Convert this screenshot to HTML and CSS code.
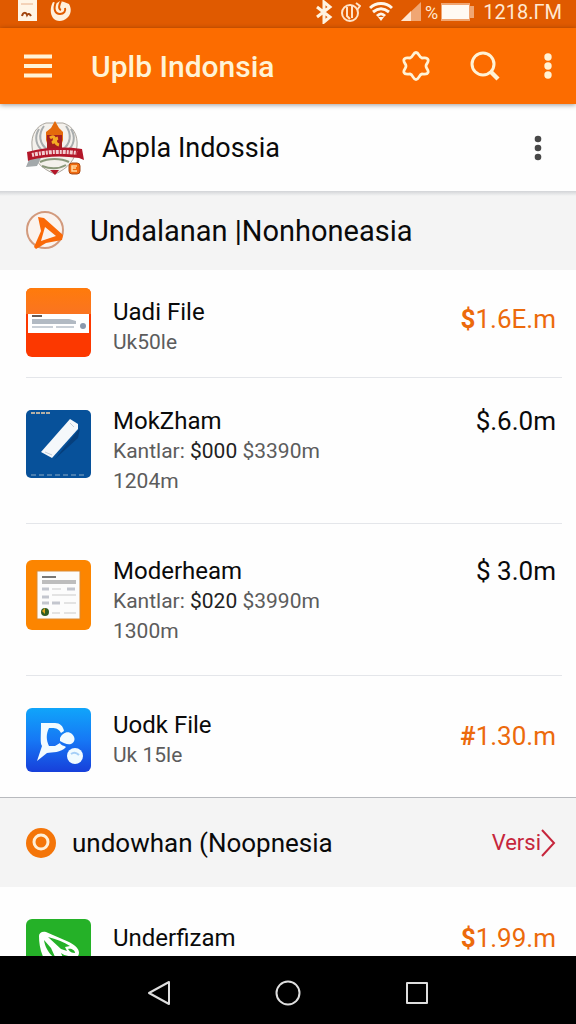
FILE: index.html
```html
<!DOCTYPE html>
<html lang="id">
<head>
    <meta charset="UTF-8">
    <meta name="viewport" content="width=device-width, initial-scale=1.0">
    <title>Uplb Indonsia</title>
    <link rel="stylesheet" href="styles.css">
</head>
<body>
    <!-- Status bar -->
    <div class="status-bar">
        <svg width="20" height="22" viewBox="0 0 20 22"><path fill="#fff5e6" d="M0 0h19v21H0z"/><path d="M3 4h12" stroke="#e8b08a" stroke-width="1"/><path d="M4 16c1-4 4-4 5-1 1-2 3-1 4 1" fill="none" stroke="#a04510" stroke-width="2"/></svg>
        <svg class="status-swirl" width="22" height="22" viewBox="0 0 22 22"><path fill="#fff0dc" d="M3 2l4 1 3-2 4 1 5 2c3 5 2 11-2 14-4 4-11 4-14 0C0 14 0 7 3 2z"/><path d="M6 2c-3 7-1 12 4 12 4 0 6-3 5-6M11 1c-2 4-3 8 0 9" fill="none" stroke="#e05a00" stroke-width="2"/></svg>
        <div class="status-right">
            <svg width="18" height="24" viewBox="0 0 18 24"><path d="M2 7l13 10-6 5V2l6 5L2 17" fill="none" stroke="#fff3e0" stroke-width="3"/></svg>
            <svg width="20" height="22" viewBox="0 0 20 22"><circle cx="9" cy="12" r="8" fill="none" stroke="#ffe3c8" stroke-width="2"/><path d="M6 6v9l3 3M11 5v12M15 2l4 3-3 4" fill="none" stroke="#ffe3c8" stroke-width="2"/></svg>
            <svg width="24" height="20" viewBox="0 0 24 20"><path d="M1 6c6-6 16-6 22 0M4 10c5-4 11-4 16 0M8 14c3-3 5-3 8 0" fill="none" stroke="#fff6ea" stroke-width="3"/><path fill="#fff6ea" d="M9 15h6l-3 4z"/></svg>
            <svg width="21" height="20" viewBox="0 0 21 20"><path fill="#f0a673" d="M20 0v19H0z"/><path fill="#ffe5cf" d="M10 9v10H0z"/></svg>
            <span class="percent">%</span>
            <svg width="34" height="18" viewBox="0 0 34 18"><path fill="#f0a673" d="M0 0h29v3h4v12h-4v3H0z"/><path fill="#fffaf3" d="M1 2h27v14H1z"/></svg>
            <span class="clock">1218.ΓM</span>
        </div>
    </div>

    <!-- App bar -->
    <header class="app-bar">
        <button class="icon-button" aria-label="Menu">
            <svg width="28" height="24" viewBox="0 0 28 24"><path d="M0 2.500h28M0 12h28M0 21.500h28" stroke="#fff3d6" stroke-width="4"/></svg>
        </button>
        <h1 class="app-title">Uplb Indonsia</h1>
        <button class="icon-button" aria-label="Settings">
            <svg width="28" height="30" viewBox="0 0 28 30"><path d="M14 1.500c3 0 3 5 6 5.500 3 0 5-1 6 1.500 1 3-2 4-2 6.500s3 4 2 6.500c-1 2.500-4 1.500-6 1.500-3 .500-3 5.500-6 5.500s-3-5-6-5.500c-2 0-5 1-6-1.500-1-2.500 2-4 2-6.500s-3-3.500-2-6.500c1-2.500 3-1.500 6-1.500 3-.500 3-5.500 6-5.500z" fill="none" stroke="#fff3d6" stroke-width="2.800"/></svg>
        </button>
        <button class="icon-button search-button" aria-label="Search">
            <svg width="30" height="30" viewBox="0 0 30 30"><circle cx="13" cy="13" r="11" fill="none" stroke="#fff3d6" stroke-width="3"/><path d="M20 20l8 8" stroke="#fff3d6" stroke-width="4.500"/></svg>
        </button>
        <button class="icon-button" aria-label="More">
            <svg width="8" height="28" viewBox="0 0 8 28" fill="#fff3d6"><circle cx="4" cy="5" r="3.700"/><circle cx="4" cy="14" r="3.700"/><circle cx="4" cy="23" r="3.700"/></svg>
        </button>
    </header>

    <main class="content">
        <div class="account">
            <svg width="58" height="54" viewBox="0 0 58 54">
                <path fill="#f4f1ec" stroke="#aaa59d" stroke-width="1" d="M20 2C10 5 5 14 6 25c0 14 10 23 23 28 12-5 21-14 22-28 1-11-4-20-14-23z"/>
                <path d="M18 5c-6 8-5 18 4 24M13 8c-5 8-3 17 4 22M40 5c6 8 5 18-4 24M45 8c5 8 3 17-4 22" fill="none" stroke="#a9adae" stroke-width="2"/>
                <path fill="#e46a0c" d="M29 0l4 7 4 4v8l-3 9H23l-3-9v-8l5-4z"/>
                <path fill="#a51e20" d="M21 14h15v16H21z"/>
                <path d="M24 17c5-4 6 3 2 5M32 17c-4 1-3 6 1 7" fill="none" stroke="#f4ac24" stroke-width="3"/>
                <path fill="#a3a9ab" d="M4 36L0 46l11-1 4-8z"/>
                <path d="M14 41c8-4 21-4 29 0M16 45c8 3 17 3 24-1" fill="none" stroke="#89977a" stroke-width="2"/>
                <path fill="#b31629" d="M1 31q27-7 55-3l2 11-5-2q-25-4-49 2l-2 1z"/>
                <path d="M6 34q22-5 45-2" fill="none" stroke="#f3cdd0" stroke-width="4" stroke-dasharray="2 1 3 1"/>
                <path fill="#b31629" d="M24 49h9l-4 5z"/>
                <rect x="43" y="42" width="11" height="11" rx="3" fill="#f06b10" stroke="#a84a16"/>
                <path d="M51 45h-5v5h5M46 47h4" fill="none" stroke="#ffd9a0" stroke-width="1.500"/>
            </svg>
            <h2 class="account-name">Appla Indossia</h2>
            <button class="icon-button" aria-label="Account options">
                <svg width="8" height="26" viewBox="0 0 8 26" fill="#484848"><circle cx="4" cy="4" r="3.300"/><circle cx="4" cy="13" r="3.300"/><circle cx="4" cy="22" r="3.300"/></svg>
            </button>
        </div>

        <div class="section-bar">
            <svg width="40" height="40" viewBox="0 0 40 40"><circle cx="19" cy="19" r="18" fill="#fbf3ee" stroke="#d29a7d" stroke-width="2"/><path fill="#fa6908" fill-rule="evenodd" d="M12 6l6 1 19 17-1 5-16 3-10 6-2-2 7-16zm7 10l-4 14 15-5z"/></svg>
            <h2 class="section-title">Undalanan |Nonhoneasia</h2>
        </div>

        <ul class="file-list">
            <li class="item item-first">
                <svg width="65" height="69" viewBox="0 0 65 69">
                    <defs>
                        <linearGradient id="orange" x1="0" y1="0" x2="0" y2="1"><stop offset="0" stop-color="#ff7b0b"/><stop offset="1" stop-color="#fa7421"/></linearGradient>
                    </defs>
                    <rect width="65" height="69" rx="6" fill="#fc3800"/>
                    <path fill="url(#orange)" d="M0 26V6q0-6 6-6h53q6 0 6 6v20z"/>
                    <path fill="#fff" d="M2 26h61v19H2z"/>
                    <path d="M6 28h10" stroke="#665b55" stroke-width="2"/>
                    <path fill="#b2bac3" d="M6 31h37l7 2v3H6z"/>
                    <path d="M6 39h21M30 39h18" stroke="#c9cfd6" stroke-width="2"/>
                    <circle cx="57" cy="38" r="3" fill="#8a98ad"/>
                </svg>
                <div class="item-text">
                    <h3 class="item-name">Uadi File</h3>
                    <p class="item-info">Uk50le</p>
                </div>
                <span class="price price-hot"><b>$</b>1.6E.m</span>
            </li>
            <li class="item item-tall">
                <svg width="65" height="68" viewBox="0 0 65 68">
                    <rect width="65" height="68" rx="5" fill="#07519a"/>
                    <path d="M5 3h20" stroke="#b5b0a5" stroke-width="2" stroke-dasharray="4 1"/>
                    <path fill="#063f7c" d="M28 50l26-32-2 10-23 21z"/>
                    <path fill="#f5f8fb" d="M44 9l8 5v5L26 48l-11-6z"/>
                    <path d="M44 13l4 4M19 42l7 3" stroke="#c4ced8" stroke-width="1"/>
                    <path d="M5 65h55" stroke="#487daf" stroke-width="2" stroke-dasharray="5 3"/>
                </svg>
                <div class="item-text">
                    <h3 class="item-name">MokZham</h3>
                    <p class="item-info">Kantlar: <span class="amount">$000</span> $3390m</p>
                    <p class="item-info">1204m</p>
                </div>
                <span class="price">$.6.0m</span>
            </li>
            <li class="item item-tall item-spaced">
                <svg width="65" height="70" viewBox="0 0 65 70">
                    <rect width="65" height="70" rx="6" fill="#fc8500"/>
                    <path fill="#fcfcfc" stroke="#d98a35" stroke-width="1" d="M11 11h43v48H11z"/>
                    <path d="M16 17h14" stroke="#777" stroke-width="2"/>
                    <path d="M16 22h34" stroke="#bdbdbd" stroke-width="4"/>
                    <path d="M16 29h7M41 29h8M16 37h7M16 43h7M26 43h8" stroke="#c3c6ce" stroke-width="3"/>
                    <path d="M26 29h9M26 35h24M26 53h8M38 43h12M38 53h12" stroke="#e3e3e3" stroke-width="2"/>
                    <circle cx="19" cy="52" r="4" fill="#315d22"/><path fill="#e1a51c" d="M16 51l3-3v6z"/>
                </svg>
                <div class="item-text">
                    <h3 class="item-name">Moderheam</h3>
                    <p class="item-info">Kantlar: <span class="amount">$020</span> $3990m</p>
                    <p class="item-info">1300m</p>
                </div>
                <span class="price">$ 3.0m</span>
            </li>
            <li class="item item-last">
                <svg width="65" height="64" viewBox="0 0 65 64">
                    <defs>
                        <linearGradient id="blue" x1="0" y1="0" x2="0" y2="1"><stop offset="0" stop-color="#10a5fa"/><stop offset="0.500" stop-color="#1678f5"/><stop offset="1" stop-color="#173fda"/></linearGradient>
                    </defs>
                    <rect width="65" height="64" rx="6" fill="url(#blue)"/>
                    <path fill="#f1fbff" fill-rule="evenodd" d="M15 15h14c5 0 8 3 9 8l-3 2c-2-4-5-5-9-5h-3c-3 6-3 12 0 18h6l5-3c1 3 4 2 6 4-5 6-14 5-19 6l-10 8 5-15c-2-3-1-8-1-23z"/>
                    <path fill="#f1fbff" d="M34 30c2-5 8-8 12-4 4 4 3 8-1 10-4 1-7-1-11-3z"/>
                    <circle cx="49" cy="48" r="8" fill="#f1fbff"/><path d="M45 46q4-3 8 1" fill="none" stroke="#a5cff7" stroke-width="2"/>
                </svg>
                <div class="item-text">
                    <h3 class="item-name">Uodk File</h3>
                    <p class="item-info">Uk 15le</p>
                </div>
                <span class="price price-hot"><b>#</b>1.30.m</span>
            </li>
        </ul>

        <div class="section-bar section-bar-more">
            <svg width="31" height="32" viewBox="0 0 31 32"><circle cx="15" cy="16" r="15" fill="#f47509"/><circle cx="15" cy="15" r="7" fill="none" stroke="#fff0d9" stroke-width="3"/></svg>
            <h2 class="section-title">undowhan (Noopnesia</h2>
            <a class="more-link" href="#">Versi<svg width="15" height="28" viewBox="0 0 15 28"><path d="M1 1l12 13L1 27" fill="none" stroke="#c6263c" stroke-width="2"/></svg></a>
        </div>

        <ul class="file-list">
            <li class="item item-last item-top">
                <svg width="65" height="64" viewBox="0 0 65 64">
                    <rect width="65" height="64" rx="6" fill="#25b128"/>
                    <path fill="#fff" fill-rule="evenodd" d="M13 17c0-3 3-5 7-4l23 10c8 4 12 9 9 14-7 1-13 0-17-3l5 12H22c-7-9-9-20-9-29zm5 4c1 8 6 15 12 19l-5-11zm4-3l13 12 6 2-2-4 5-1c-6-4-14-7-22-9zm20 12c2 3 4 4 7 4 0-3-4-5-7-4z"/>
                </svg>
                <div class="item-text">
                    <h3 class="item-name">Underfizam</h3>
                </div>
                <span class="price price-hot"><b>$</b>1.99.m</span>
            </li>
        </ul>
    </main>

    <!-- System navigation -->
    <nav class="nav-bar">
        <button class="icon-button" aria-label="Back">
            <svg width="24" height="28" viewBox="0 0 24 28"><path d="M22 3v22L2 14z" fill="none" stroke="#dedede" stroke-width="2" stroke-linejoin="round"/></svg>
        </button>
        <button class="icon-button" aria-label="Home">
            <svg width="26" height="26" viewBox="0 0 26 26"><circle cx="13" cy="13" r="11.500" fill="none" stroke="#dedede" stroke-width="2"/></svg>
        </button>
        <button class="icon-button" aria-label="Recent apps">
            <svg width="24" height="24" viewBox="0 0 24 24"><path d="M2 2h20v20H2z" fill="none" stroke="#dedede" stroke-width="2" stroke-linejoin="round"/></svg>
        </button>
    </nav>
</body>
</html>
```

FILE: styles.css
```css
/* General Page Styling */
* {
    box-sizing: border-box;
}
body {
    display: flex;
    flex-direction: column;
    height: 100vh;
    margin: 0;
    background-color: #fefefe;
    color: #0a0a0a;
    font-family: Roboto, "Liberation Sans", sans-serif;
}
h1, h2, h3, p, ul {
    margin: 0;
    padding: 0;
    font-weight: normal;
}
svg {
    display: block;
    flex: none;
}
.icon-button {
    padding: 0;
    border: none;
    background: none;
    cursor: pointer;
}

/* Status Bar */
.status-bar {
    display: flex;
    flex: none;
    height: 28px;
    padding: 0 14px 0 18px;
    background-color: #e05a00;
    color: #ffe9d2;
}
.status-swirl {
    margin-left: 12px;
}
.status-right {
    display: flex;
    align-items: center;
    gap: 8px;
    height: 24px;
    margin-left: auto;
}
.percent {
    margin: 0 -5px;
    font-size: 18px;
}
.clock {
    font-size: 20px;
}

/* App Bar */
.app-bar {
    display: flex;
    flex: none;
    align-items: center;
    height: 76px;
    padding: 0 24px;
    background-color: #fc6c00;
    box-shadow: 0 1px 5px rgba(0, 0, 0, 0.4);
    z-index: 1;
}
.app-title {
    flex: 1;
    margin-left: 39px;
    color: #fff3d6;
    font-size: 30px;
    font-weight: 500;
}
.search-button {
    margin: 0 44px 0 40px;
}

/* Content */
.content {
    flex: 1;
    min-height: 0;
    overflow: hidden;
}
.account {
    display: flex;
    align-items: center;
    height: 87px;
    padding: 0 34px 0 26px;
}
.account-name {
    flex: 1;
    margin-left: 18px;
    font-size: 27px;
}
.section-bar {
    display: flex;
    align-items: center;
    height: 79px;
    padding: 0 20px 0 26px;
    background: linear-gradient(#d2d4d7, #f4f4f4 5px);
}
.section-title {
    margin-left: 24px;
    font-size: 29px;
}
.section-bar-more {
    height: 90px;
    border-top: 1px solid #b8babe;
    background: #f4f4f4;
}
.section-bar-more .section-title {
    flex: 1;
    margin-left: 15px;
    font-size: 26px;
}
.more-link {
    display: flex;
    align-items: center;
    color: #c6263c;
    font-size: 22px;
    text-decoration: none;
}

/* File List */
.file-list {
    list-style-type: none;
}
.item {
    display: flex;
    margin: 0 14px 0 26px;
    padding-right: 6px;
    border-bottom: 1px solid #e4e6ea;
}
.item-text {
    flex: 1;
    margin-left: 22px;
}
.item-name {
    font-size: 24px;
    line-height: 30px;
}
.item-info {
    color: #5c5c5c;
    font-size: 21px;
    line-height: 30px;
}
.amount {
    color: #222;
}
.price {
    font-size: 26px;
    line-height: 30px;
}
.price-hot {
    align-self: center;
    padding-bottom: 8px;
    color: #ec6a0c;
}
.item-first {
    align-items: flex-end;
    padding-top: 18px;
    padding-bottom: 20px;
}
.item-tall {
    padding-top: 28px;
    padding-bottom: 27px;
}
.item-tall svg {
    margin-top: 4px;
}
.item-spaced {
    padding-top: 32px;
    padding-bottom: 29px;
}
.item-last {
    align-items: center;
    padding-top: 32px;
    padding-bottom: 25px;
    border-bottom: none;
}
.item-top {
    align-items: flex-start;
}
.item-top .price {
    align-self: flex-start;
}
.item-top .item-name,
.item-top .price {
    padding-top: 4px;
}

/* System Navigation */
.nav-bar {
    display: flex;
    flex: none;
    align-items: center;
    justify-content: center;
    gap: 104px;
    height: 68px;
    padding-top: 5px;
    background-color: #000;
}
```
